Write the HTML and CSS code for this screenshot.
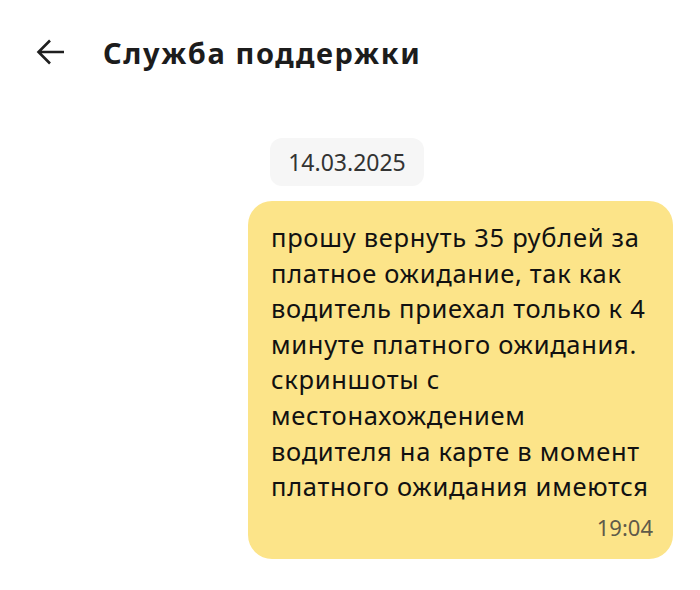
FILE: index.html
```html
<!DOCTYPE html>
<html lang="ru">
<head>
    <meta charset="UTF-8">
    <meta name="viewport" content="width=device-width, initial-scale=1.0">
    <title>Служба поддержки</title>
    <link rel="stylesheet" href="styles.css">
</head>
<body>
    <div class="header">
        <div class="back">
            <svg width="30" height="30" viewBox="0 0 30 30">
                <path d="M28 15H3M14 3.5L2.5 15L14 26.5" fill="none" stroke="#1f1f1f" stroke-width="2.6"/>
            </svg>
        </div>
        <h1 class="title">Служба поддержки</h1>
    </div>
    <div class="chat">
        <div class="date">14.03.2025</div>
        <div class="msg">
            <p class="msg-text">прошу вернуть 35 рублей за платное ожидание, так как водитель приехал только к 4 минуте платного ожидания. скриншоты с местонахождением водителя на карте в момент платного ожидания имеются</p>
            <div class="msg-time">19:04</div>
        </div>
    </div>
</body>
</html>
```

FILE: styles.css
```css
*{
    padding: 0;
    margin: 0;
    box-sizing: border-box;
}
body{
    background-color: #fff;
    font-family: "Noto Sans", Roboto, sans-serif;
    color: #1f1f1f;
}
.header{
    display: flex;
    align-items: center;
    height: 104px;
    padding-left: 36px;
}
.back{
    width: 30px;
    height: 30px;
    margin-right: 37px;
}
.back svg{
    display: block;
}
.title{
    font-size: 29px;
    font-weight: 700;
    letter-spacing: 1.6px;
    color: #1c1c1c;
}
.chat{
    display: flex;
    flex-direction: column;
    align-items: center;
    padding: 34px 6px 0 0;
}
.date{
    background-color: #f6f6f6;
    border-radius: 12px;
    padding: 0 18px;
    height: 48px;
    line-height: 48px;
    font-size: 23px;
    color: #333;
}
.msg{
    align-self: flex-end;
    width: 425px;
    margin: 15px 21px 0 0;
    background-color: #fce489;
    border-radius: 24px;
    padding: 19px 23px 19px 23px;
}
.msg-text{
    font-size: 25.5px;
    letter-spacing: 0.7px;
    line-height: 35.6px;
    color: #111;
}
.msg-time{
    margin: 9px -3px 0 0;
    text-align: right;
    font-size: 22px;
    line-height: 26px;
    color: #5f5a4a;
}
```
